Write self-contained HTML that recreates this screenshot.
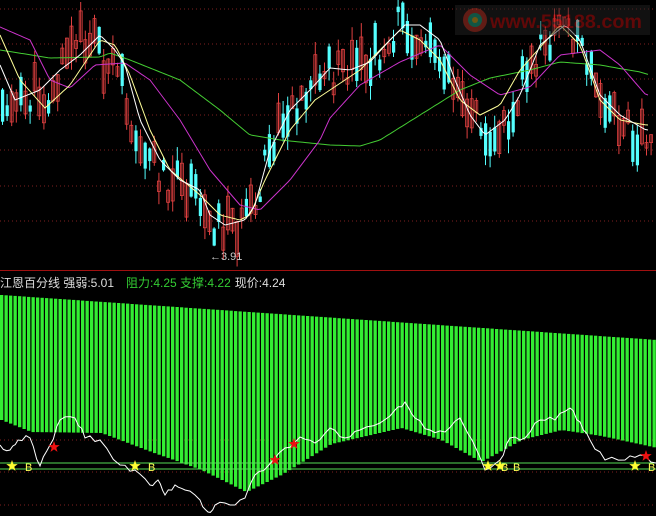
<!DOCTYPE html><html><head><meta charset="utf-8"><style>
html,body{margin:0;background:#000;width:656px;height:516px;overflow:hidden}
svg{display:block}
</style></head><body>
<svg id="s" width="656" height="516" xmlns="http://www.w3.org/2000/svg" font-family="Liberation Sans, Noto Sans CJK SC, sans-serif">
<rect width="656" height="516" fill="#000"/>
<g id="g"></g>
<line x1="0" y1="270.5" x2="656" y2="270.5" stroke="#a01010"/>
<g opacity="0.5"><rect x="455" y="5" width="195" height="30" fill="#222"/>
<circle cx="475" cy="20" r="12" fill="#c0392b"/><circle cx="475" cy="20" r="7" fill="#2a8" /><circle cx="475" cy="20" r="3" fill="#da2"/>
<text x="490" y="28" fill="#c01010" font-size="19" font-weight="bold" textLength="152" lengthAdjust="spacingAndGlyphs">www.55188.com</text></g>
<text x="210" y="260" fill="#ccc" font-size="11">←3.91</text>
<text x="0" y="287" font-size="12"><tspan fill="#ddd">江恩百分线 强弱:5.01</tspan><tspan fill="#3c3" dx="12">阻力:4.25 支撑:4.22</tspan><tspan fill="#ddd" dx="4">现价:4.24</tspan></text>
</svg>
<script>
(function(){
var g=document.getElementById('g'),h='';
function interp(p,x){for(var i=0;i<p.length-1;i++){if(x<=p[i+1][0]){var t=(x-p[i][0])/(p[i+1][0]-p[i][0]);return p[i][1]+t*(p[i+1][1]-p[i][1]);}}return p[p.length-1][1];}
var seed=11;function r(){seed=(seed*9301+49297)%233280;return seed/233280;}
function path(p,c,step){var d='';for(var x=0;x<=650;x+=step||3){d+=(x?'L':'M')+x+' '+interp(p,x).toFixed(1);}return '<path d="'+d+'" stroke="'+c+'" fill="none" stroke-width="1"/>';}
[9,44,79,115,150,186,221,440,472,505].forEach(function(y){h+='<line x1="0" y1="'+y+'" x2="656" y2="'+y+'" stroke="#802020" stroke-dasharray="1 3"/>';});
var Wm=[[0,65],[15,100],[40,90],[60,70],[80,55],[100,35],[115,50],[125,65],[140,120],[160,160],[180,180],[200,190],[210,215],[225,225],[245,220],[255,205],[270,150],[290,110],[310,90],[330,68],[350,70],[370,62],[390,40],[405,25],[420,25],[440,40],[455,80],[470,115],[485,135],[505,120],[520,95],[540,45],[565,25],[580,40],[600,95],[620,115],[646,130]];
var P=[[0,100],[20,105],[35,90],[50,100],[65,55],[80,40],[95,35],[105,70],[120,80],[130,120],[145,150],[160,175],[175,185],[190,195],[205,215],[220,225],[240,220],[255,215],[265,160],[280,125],[295,100],[310,80],[325,70],[340,75],[360,70],[380,50],[400,20],[420,40],[440,55],[460,90],[475,120],[500,135],[510,110],[520,80],[540,50],[560,25],[575,30],[590,80],[600,110],[615,120],[630,135],[650,130]];
for(var x=1;x<652;x+=4.6){var c=interp(P,x)+(r()-0.5)*36;var bh=5+r()*30;var up=r()>0.48;var col=up?'#e04040':'#54ffff';
var ty=c-bh/2-r()*14,by=c+bh/2+r()*14;
h+='<line x1="'+(x+1.5).toFixed(1)+'" y1="'+ty.toFixed(1)+'" x2="'+(x+1.5).toFixed(1)+'" y2="'+by.toFixed(1)+'" stroke="'+col+'"/>';
h+=up?'<rect x="'+x.toFixed(1)+'" y="'+(c-bh/2).toFixed(1)+'" width="3" height="'+bh.toFixed(1)+'" fill="none" stroke="'+col+'" stroke-width="0.8"/>':'<rect x="'+x.toFixed(1)+'" y="'+(c-bh/2).toFixed(1)+'" width="3.2" height="'+bh.toFixed(1)+'" fill="'+col+'"/>';}
h+=path([[0,50],[50,58],[100,57],[110,53],[130,60],[180,80],[220,110],[250,135],[280,140],[330,145],[360,146],[380,140],[420,115],[460,90],[490,78],[530,70],[560,62],[600,65],[640,72],[650,75]],'#44cc33');
h+=path([[0,27],[30,40],[50,80],[70,88],[95,65],[125,63],[150,80],[180,120],[210,170],[240,205],[260,210],[290,180],[320,140],[330,118],[360,85],[400,62],[440,45],[470,75],[500,95],[530,87],[560,55],[600,50],[620,65],[646,95]],'#cc33cc');
h+=path([[0,35],[20,80],[45,108],[70,85],[100,40],[115,45],[130,75],[150,130],[170,170],[200,195],[220,215],[240,220],[250,215],[265,180],[290,130],[315,100],[330,90],[360,70],[400,30],[420,40],[440,60],[460,100],[480,115],[500,105],[520,70],[560,25],[580,45],[600,100],[620,120],[646,125]],'#ffff99');
h+=path(Wm,'#ffffff');
var B=[[0,420],[30,432],[100,433],[150,452],[200,470],[245,492],[280,475],[330,444],[400,428],[440,440],[480,462],[520,440],[560,430],[600,436],[656,448]];
for(var x2=0;x2<656;x2+=4.5){var t=295+x2/656*45;var b=interp(B,x2);h+='<rect x="'+x2.toFixed(1)+'" y="'+t.toFixed(1)+'" width="3.3" height="'+(b-t).toFixed(1)+'" fill="#33ee33"/>';}
h+='<line x1="0" y1="463" x2="656" y2="463" stroke="#55dd55"/><line x1="0" y1="469" x2="656" y2="469" stroke="#55dd55"/>';
var W=[[0,445],[10,450],[18,440],[30,438],[40,466],[50,445],[60,420],[75,418],[85,438],[100,440],[120,465],[135,470],[150,485],[158,480],[165,495],[175,485],[185,490],[200,500],[208,512],[215,505],[230,505],[245,498],[255,475],[268,466],[285,448],[300,437],[315,443],[330,428],[345,438],[360,430],[380,423],[395,410],[405,402],[415,418],[430,430],[445,432],[460,418],[472,440],[485,470],[500,460],[510,438],[525,438],[540,420],[555,420],[570,408],[580,422],[590,440],[605,460],[625,460],[640,455],[656,463]];
var d='';for(var i=0;i<W.length-1;i++){var a=W[i],bb=W[i+1];for(var k=0;k<3;k++){var xx=a[0]+(bb[0]-a[0])*k/3,yy=a[1]+(bb[1]-a[1])*k/3+(k?(r()-0.5)*6:0);d+=(i||k?'L':'M')+xx.toFixed(1)+' '+yy.toFixed(1);}}d+='L656 463';
h+='<path d="'+d+'" stroke="#fff" fill="none" stroke-width="1"/>';
function star(cx,cy,R,c){var s='';for(var i=0;i<10;i++){var a=Math.PI/5*i-Math.PI/2,rr=i%2?R*0.4:R;s+=(cx+rr*Math.cos(a)).toFixed(1)+','+(cy+rr*Math.sin(a)).toFixed(1)+' ';}return '<polygon points="'+s+'" fill="'+c+'"/>';}
[[12,466],[135,466],[488,466],[500,466],[635,466]].forEach(function(p){h+=star(p[0],p[1],6,'#ffff33')+'<text x="'+(p[0]+13)+'" y="'+(p[1]+5)+'" fill="#ffff55" font-size="11">B</text>';});
[[54,447],[275,460],[294,444],[646,456]].forEach(function(p){h+=star(p[0],p[1],6,'#ee1111');});
g.innerHTML=h;
})();
</script>
</body></html>
